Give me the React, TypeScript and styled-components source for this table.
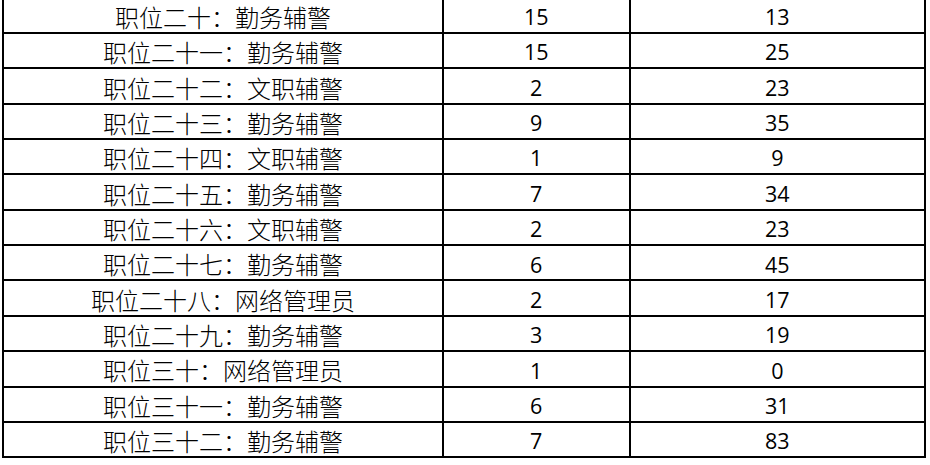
import React from 'react';
import styled, { createGlobalStyle } from 'styled-components';

interface PositionRow {
  name: string;
  planned: number;
  applied: number;
}

const rows: PositionRow[] = [
  { name: '职位二十：勤务辅警', planned: 15, applied: 13 },
  { name: '职位二十一：勤务辅警', planned: 15, applied: 25 },
  { name: '职位二十二：文职辅警', planned: 2, applied: 23 },
  { name: '职位二十三：勤务辅警', planned: 9, applied: 35 },
  { name: '职位二十四：文职辅警', planned: 1, applied: 9 },
  { name: '职位二十五：勤务辅警', planned: 7, applied: 34 },
  { name: '职位二十六：文职辅警', planned: 2, applied: 23 },
  { name: '职位二十七：勤务辅警', planned: 6, applied: 45 },
  { name: '职位二十八：网络管理员', planned: 2, applied: 17 },
  { name: '职位二十九：勤务辅警', planned: 3, applied: 19 },
  { name: '职位三十：网络管理员', planned: 1, applied: 0 },
  { name: '职位三十一：勤务辅警', planned: 6, applied: 31 },
  { name: '职位三十二：勤务辅警', planned: 7, applied: 83 },
];

const GlobalStyle = createGlobalStyle`
  html, body {
    margin: 0;
    padding: 0;
    background: #fff;
    overflow: hidden;
  }
`;

const Sheet = styled.div`
  display: grid;
  grid-template-columns: 437.4px 185px 293.3px;
  grid-auto-rows: 33.36px;
  gap: 2px;
  padding: 2px;
  background: #000;
  width: max-content;
  margin: -3.4px 0 0 2.3px;
`;

const Cell = styled.div<{ $cjk?: boolean }>`
  background: #fff;
  display: flex;
  align-items: center;
  justify-content: center;
  box-sizing: border-box;
  padding-top: 3px;
  color: #000;
  white-space: nowrap;
  font-family: ${({ $cjk }) =>
    $cjk ? '"Noto Sans CJK SC", sans-serif' : '"Open Sans", "Liberation Sans", sans-serif'};
  font-size: ${({ $cjk }) => ($cjk ? '24px' : '21.5px')};
  font-weight: ${({ $cjk }) => ($cjk ? 300 : 400)};
  line-height: 1;
`;

export default function App() {
  return (
    <>
      <GlobalStyle />
      <Sheet>
        {rows.map((row) => (
          <React.Fragment key={row.name}>
            <Cell $cjk>{row.name}</Cell>
            <Cell>{row.planned}</Cell>
            <Cell>{row.applied}</Cell>
          </React.Fragment>
        ))}
      </Sheet>
    </>
  );
}
